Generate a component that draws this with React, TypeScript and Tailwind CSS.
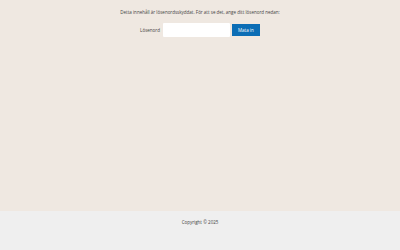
export default function App() {
  return (
    <div className="flex h-[250px] w-[400px] flex-col font-['Open_Sans',sans-serif] text-[#444]">
      <main className="flex flex-1 flex-col items-center bg-[#efe8e1] pt-[9px]">
        <p className="text-[4.5px] leading-[6px]">
          Detta innehåll är lösenordsskyddat. För att se det, ange ditt lösenord nedan:
        </p>
        <form className="mt-[8px] flex items-center" onSubmit={(e) => e.preventDefault()}>
          <label className="mr-[3px] text-[4.5px]">Lösenord</label>
          <input
            type="password"
            className="h-[14px] w-[67px] rounded-[1px] bg-white outline-none"
          />
          <button
            type="submit"
            className="ml-[2px] h-[12px] w-[28px] bg-[#0b6db5] text-[4.5px] text-white"
          >
            Mata in
          </button>
        </form>
      </main>
      <footer className="flex h-[39px] items-start justify-center bg-[#efefef] pt-[8px]">
        <p className="text-[4.5px] leading-[6px]">Copyright © 2025</p>
      </footer>
    </div>
  );
}
